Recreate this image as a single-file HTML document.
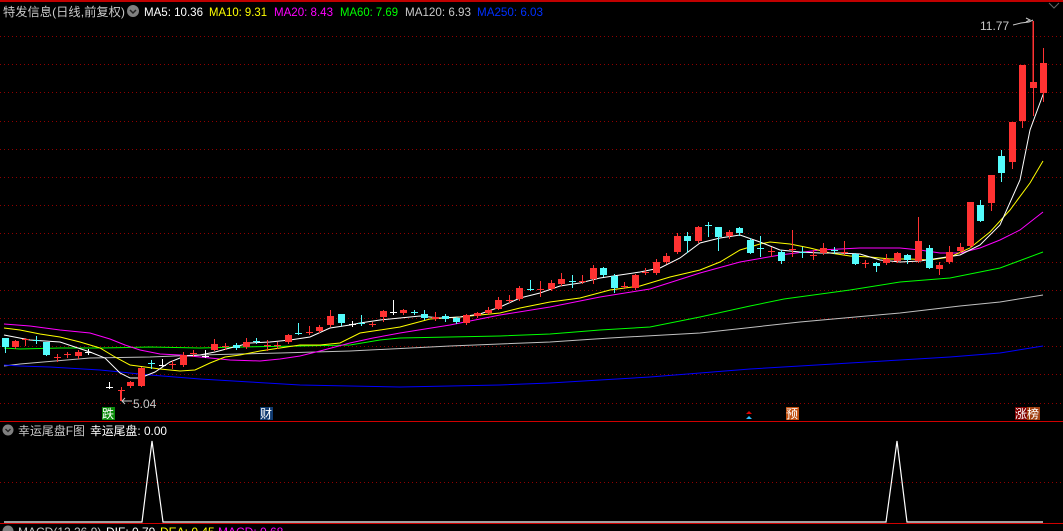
<!DOCTYPE html><html><head><meta charset="utf-8"><style>
html,body{margin:0;padding:0;background:#000;width:1063px;height:531px;overflow:hidden}
svg{display:block}
text{font-family:"Liberation Sans","Noto Sans CJK SC",sans-serif;font-size:12px}
</style></head><body>
<svg id="s" width="1063" height="531" xmlns="http://www.w3.org/2000/svg">
<rect x="0" y="0" width="1063" height="531" fill="#000"/>
<line x1="0" y1="1" x2="1063" y2="1" stroke="#c00000" stroke-width="2"/>
<g id="grid" stroke="#900000" stroke-dasharray="1,3" stroke-width="1"></g>
<line x1="0" y1="421.5" x2="1063" y2="421.5" stroke="#d00000"/>
<line x1="0" y1="523.5" x2="1063" y2="523.5" stroke="#d00000"/>
<line x1="0" y1="482.5" x2="1063" y2="482.5" stroke="#900000" stroke-dasharray="1,3"/>
<g id="ma" fill="none" stroke-width="1"></g>
<g id="cd"></g>
<!-- header -->
<text x="3" y="16" fill="#c8c8c8" textLength="122" lengthAdjust="spacingAndGlyphs">特发信息(日线,前复权)</text>
<circle cx="133" cy="11" r="6" fill="#808080"/><path d="M130 10l3 3 3-3" stroke="#222" fill="none" stroke-width="1.5"/>
<text x="144" y="16" fill="#fff" textLength="59" lengthAdjust="spacingAndGlyphs">MA5: 10.36</text>
<text x="209" y="16" fill="#ffff00" textLength="58" lengthAdjust="spacingAndGlyphs">MA10: 9.31</text>
<text x="274" y="16" fill="#ff00ff" textLength="59" lengthAdjust="spacingAndGlyphs">MA20: 8.43</text>
<text x="340" y="16" fill="#00ff00" textLength="58" lengthAdjust="spacingAndGlyphs">MA60: 7.69</text>
<text x="405" y="16" fill="#c8c8c8" textLength="66" lengthAdjust="spacingAndGlyphs">MA120: 6.93</text>
<text x="477" y="16" fill="#0030ff" textLength="66" lengthAdjust="spacingAndGlyphs">MA250: 6.03</text>
<path d="M1049 3l5 5 5-5" stroke="#666" fill="none"/>
<!-- labels -->
<text x="980" y="30" fill="#c8c8c8">11.77</text>
<path d="M1013 25l8-2 8-1 4-2M1026 18l4 2-4 2" stroke="#c8c8c8" fill="none"/>
<line x1="1033" y1="21" x2="1033" y2="82" stroke="#ff3232"/>
<line x1="120.5" y1="391" x2="120.5" y2="401" stroke="#ff3232"/>
<text x="133" y="408" fill="#c8c8c8">5.04</text>
<path d="M122 401h10M125 398l-3 3 3 3" stroke="#c8c8c8" fill="none"/>
<rect x="102" y="407" width="13" height="13" fill="#0a8a0a"/><text x="102" y="418" fill="#fff" style="font-size:12px">跌</text>
<rect x="260" y="407" width="13" height="13" fill="#103a70"/><text x="260" y="418" fill="#fff" style="font-size:12px">财</text>
<path d="M746 414l3-3 3 3z" fill="#e00000"/><path d="M746 419l3-3 3 3z" fill="#30c0ff"/>
<rect x="786" y="407" width="13" height="13" fill="#c05010"/><text x="786" y="418" fill="#fff" style="font-size:12px">预</text>
<rect x="1015" y="407" width="12" height="13" fill="#800000"/><rect x="1027" y="407" width="13" height="13" fill="#a04010"/>
<text x="1015" y="418" fill="#fff" style="font-size:12px">涨榜</text>
<!-- lower panel -->
<circle cx="8" cy="430" r="5.5" fill="#808080"/><path d="M5.5 429l2.5 2.5 2.5-2.5" stroke="#222" fill="none" stroke-width="1.3"/>
<text x="18" y="435" fill="#c8c8c8" textLength="67" lengthAdjust="spacingAndGlyphs">幸运尾盘F图</text>
<text x="90" y="435" fill="#fff" textLength="77" lengthAdjust="spacingAndGlyphs">幸运尾盘: 0.00</text>
<polyline points="4,522 142,522 152,441 163,522 886,522 897,441 907,522 1043,522" fill="none" stroke="#fff" stroke-width="1.2"/>
<text x="18" y="536" fill="#c8c8c8">MACD(12,26,9)</text>
<text x="106" y="536" fill="#fff">DIF: 0.79</text>
<text x="160" y="536" fill="#ffff00">DEA: 0.45</text>
<text x="218" y="536" fill="#ff00ff">MACD: 0.68</text>
<circle cx="8" cy="531" r="5.5" fill="#808080"/>
</svg>
<script>
var NS="http://www.w3.org/2000/svg";
function el(p,t,a){var e=document.createElementNS(NS,t);for(var k in a)e.setAttribute(k,a[k]);p.appendChild(e);return e;}
var g=document.getElementById('grid');
for(var i=0;i<14;i++){var y=Math.round(36+28.2*i)+0.5;el(g,'line',{x1:0,y1:y,x2:1063,y2:y});}
var ma=document.getElementById('ma');
var L={
"#c0c0c0":[[4,366],[20,364],[55,361],[90,358],[150,357],[200,355],[280,353],[350,351],[450,346],[550,342],[610,338],[700,333],[800,322],[900,313],[960,306],[1000,302],[1043,295]],
"#0000ff":[[4,365],[20,366],[50,367],[100,370],[150,375],[200,379],[250,382],[300,385],[350,386],[400,387],[450,386],[500,385],[550,383],[600,380],[650,377],[700,373],[750,369],[800,366],[850,363],[900,360],[950,357],[1000,353],[1043,346]],
"#00ff00":[[4,348],[20,349],[60,348],[100,348],[150,347],[200,348],[240,347],[300,346],[350,345],[380,340],[400,338],[450,337],[500,336],[550,334],[600,330],[650,327],[700,317],[750,306],[784,299],[850,290],[900,282],[950,278],[1000,268],[1043,252]],
"#ff00ff":[[4,324],[30,326],[60,330],[90,333],[110,339],[125,345],[140,350],[160,354],[180,355],[200,357],[230,360],[260,361],[280,359],[300,356],[320,351],[350,343],[373,338],[400,333],[450,325],[500,315],[550,307],[600,297],[650,289],[700,273],[740,262],[780,255],[820,250],[860,248],[900,248],[920,250],[940,253],[960,253],[980,248],[1000,240],[1020,230],[1043,212]],
"#ffff00":[[4,328],[20,330],[40,334],[60,337],[80,342],[100,348],[115,357],[130,365],[145,367],[160,369],[180,371],[195,370],[210,363],[225,357],[240,355],[260,351],[280,348],[300,345],[320,345],[340,343],[360,333],[380,330],[400,327],[430,319],[460,317],[480,315],[500,313],[520,308],[550,302],[580,298],[610,290],[640,286],[670,277],[700,270],[720,262],[740,250],[760,244],[770,242],[790,244],[810,248],[830,253],[850,256],[870,257],[890,259],[910,259],[930,260],[950,257],[970,248],[990,232],[1010,210],[1030,183],[1043,161]],
"#ffffff":[[4,335],[30,340],[60,342],[90,352],[105,358],[120,373],[130,378],[140,378],[155,372],[170,362],[185,356],[200,355],[215,352],[230,348],[250,343],[270,342],[290,340],[310,337],[330,328],[350,325],[360,323],[380,320],[400,318],[420,316],[440,318],[460,317],[480,314],[500,307],[520,298],[540,293],[560,286],[580,283],[600,278],[620,275],[640,272],[660,268],[680,258],[700,243],[720,238],[740,235],[760,242],[780,250],[800,252],[820,253],[840,253],[860,254],[880,260],[900,262],[920,261],[940,258],[960,255],[980,245],[1000,225],[1020,180],[1030,130],[1044,92]]};
for(var c in L){el(ma,'polyline',{points:L[c].map(function(p){return p.join(',')}).join(' '),stroke:c});}
var C=[[5,338,347,338,352,'c'],[15,341,347,340,348,'r'],[25,339,340,338,345,'r'],[36,340,341,336,343,'c'],[46,342,355,342,355,'c'],[57,357,358,354,361,'r'],[67,354,355,352,357,'r'],[78,352,356,350,358,'r'],[88,352,353,349,354,'w'],[109,387,388,382,388,'w'],[121,390,391,387,400,'r'],[130,382,386,381,387,'r'],[141,368,386,367,386,'r'],[151,363,364,360,368,'c'],[162,365,366,359,366,'w'],[172,364,365,361,368,'r'],[183,355,365,352,366,'r'],[193,353,354,350,356,'r'],[205,356,357,350,357,'w'],[214,344,350,339,350,'r'],[225,346,347,343,349,'r'],[236,345,348,343,349,'c'],[246,342,347,338,348,'r'],[256,341,342,338,343,'c'],[267,345,346,340,350,'r'],[277,345,346,342,348,'r'],[288,335,342,334,343,'r'],[298,333,334,323,334,'c'],[309,332,333,326,334,'r'],[319,327,331,325,332,'r'],[330,316,325,310,326,'r'],[341,314,323,314,325,'c'],
[352,324,325,321,326,'w'],[361,323,324,315,325,'c'],[372,324,325,322,326,'r'],[383,311,317,310,321,'r'],[393,312,313,300,314,'w'],[403,310,313,309,314,'r'],[414,312,313,310,314,'c'],[424,314,318,310,319,'c'],[435,317,319,312,320,'r'],[445,316,319,314,321,'c'],[456,318,322,317,323,'c'],[466,315,323,314,324,'r'],[477,313,316,312,317,'r'],[488,310,313,307,314,'r'],[498,300,309,297,309,'r'],[509,300,301,295,302,'r'],[519,288,299,286,300,'r'],[530,289,290,280,290,'c'],[540,289,290,281,296,'r'],[551,283,289,280,290,'r'],[561,279,284,273,285,'r'],[572,281,282,275,287,'c'],[582,281,282,275,283,'r'],[593,268,279,265,283,'r'],[603,268,275,267,276,'c'],[614,276,288,274,292,'c'],[624,286,287,282,288,'r'],[635,275,288,274,289,'r'],[645,272,273,268,274,'r'],[656,262,273,259,274,'r'],[666,256,262,253,263,'r'],[677,236,252,233,253,'r'],[687,236,241,232,252,'c'],[698,227,241,226,242,'r'],
[708,225,226,222,236,'c'],[718,227,237,227,250,'c'],[729,232,236,230,238,'r'],[739,228,233,227,235,'c'],[750,240,253,238,253,'c'],[760,248,249,236,256,'c'],[771,251,252,247,256,'r'],[781,252,261,250,263,'c'],[792,249,250,230,256,'r'],[802,252,253,247,257,'c'],[813,255,256,250,259,'r'],[823,248,253,243,254,'r'],[834,250,251,247,253,'c'],[844,252,253,241,254,'r'],[855,254,264,253,264,'c'],[865,263,264,260,267,'r'],[876,263,266,262,271,'c'],[886,259,263,254,264,'r'],[897,253,261,252,262,'r'],[907,255,260,254,263,'c'],[918,241,261,217,262,'r'],[929,248,268,245,268,'c'],[939,265,269,262,274,'r'],[949,252,262,246,263,'r'],[960,247,251,243,252,'r'],[970,202,246,202,247,'r'],[980,205,221,200,221,'c'],[991,175,203,175,210,'r'],[1001,156,173,150,181,'c'],[1012,122,162,122,168,'r'],[1022,65,121,65,127,'r'],[1033,82,88,21,115,'r'],[1043,63,93,48,101,'r']];
var cd=document.getElementById('cd');
var col={r:'#ff3232',c:'#54fcfc',w:'#ffffff'};
C.forEach(function(k){var x=k[0],f=col[k[5]];
el(cd,'line',{x1:x+0.5,y1:k[3],x2:x+0.5,y2:k[4]+1,stroke:f});
var h=Math.max(1,k[2]-k[1]);el(cd,'rect',{x:x-3,y:k[1],width:7,height:h,fill:f});});
</script>
</body></html>
